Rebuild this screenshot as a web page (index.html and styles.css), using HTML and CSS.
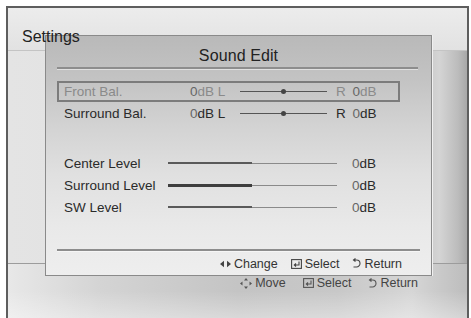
FILE: index.html
```html
<!doctype html>
<html lang="en">
  <head>
    <meta charset="UTF-8" />
    <meta name="viewport" content="width=device-width, initial-scale=1.0" />
    <title>Settings - Sound Edit</title>
    <link rel="stylesheet" href="styles.css">
  </head>
  <body>
    <div class="screen">
      <div class="topbar">
        <span class="screen-title">Settings</span>
      </div>
      <div class="menu-area"></div>
      <div class="guide">
        <span class="hint">
          <svg class="icon" width="12" height="11" viewBox="0 0 12 11">
            <path d="M6 0 L8 2.5 L4 2.5Z M6 11 L8 8.5 L4 8.5Z M0 5.5 L2.5 3.5 L2.5 7.5Z M12 5.5 L9.5 3.5 L9.5 7.5Z" fill="#555"/>
          </svg>Move
        </span>
        <span class="hint">
          <svg class="icon" width="11" height="10" viewBox="0 0 11 10">
            <rect x="0.6" y="0.6" width="9.8" height="8.8" fill="none" stroke="#555" stroke-width="1.1"/>
            <path d="M8 2.5 V6 H3.5 M5 4.5 L3.3 6 L5 7.5" fill="none" stroke="#555" stroke-width="1.1"/>
          </svg>Select
        </span>
        <span class="hint">
          <svg class="icon" width="9" height="11" viewBox="0 0 9 11">
            <path d="M2 2 H4.5 A3.5 3.5 0 0 1 4.5 9 H1.5 M3.5 0.5 L1.5 2 L3.5 3.5" fill="none" stroke="#555" stroke-width="1.1"/>
          </svg>Return
        </span>
      </div>

      <div class="dialog">
        <div class="dialog-title">Sound Edit</div>
        <div class="rule"></div>

        <div class="rows">
          <div class="row focused">
            <span class="label">Front Bal.</span>
            <span class="bal-left"><span class="zero">0</span>dB L</span>
            <span class="bal-track"><span class="bal-dot"></span></span>
            <span class="bal-right">R <span class="zero">0</span>dB</span>
          </div>
          <div class="row">
            <span class="label">Surround Bal.</span>
            <span class="bal-left"><span class="zero">0</span>dB L</span>
            <span class="bal-track"><span class="bal-dot"></span></span>
            <span class="bal-right">R <span class="zero">0</span>dB</span>
          </div>

          <div class="row level first">
            <span class="label">Center Level</span>
            <span class="lvl-track"><span class="lvl-fill"></span></span>
            <span class="lvl-value"><span class="zero">0</span>dB</span>
          </div>
          <div class="row level">
            <span class="label">Surround Level</span>
            <span class="lvl-track"><span class="lvl-fill thick"></span></span>
            <span class="lvl-value"><span class="zero">0</span>dB</span>
          </div>
          <div class="row level">
            <span class="label">SW Level</span>
            <span class="lvl-track"><span class="lvl-fill"></span></span>
            <span class="lvl-value"><span class="zero">0</span>dB</span>
          </div>
        </div>

        <div class="rule bottom"></div>
        <div class="dialog-foot">
          <span class="hint">
            <svg class="icon" width="11" height="8" viewBox="0 0 11 8">
              <path d="M0 4 L4 0.8 L4 7.2Z M11 4 L7 0.8 L7 7.2Z" fill="#444"/>
            </svg>Change
          </span>
          <span class="hint">
            <svg class="icon" width="11" height="10" viewBox="0 0 11 10">
              <rect x="0.6" y="0.6" width="9.8" height="8.8" fill="none" stroke="#444" stroke-width="1.1"/>
              <path d="M8 2.5 V6 H3.5 M5 4.5 L3.3 6 L5 7.5" fill="none" stroke="#444" stroke-width="1.1"/>
            </svg>Select
          </span>
          <span class="hint">
            <svg class="icon" width="9" height="11" viewBox="0 0 9 11">
              <path d="M2 2 H4.5 A3.5 3.5 0 0 1 4.5 9 H1.5 M3.5 0.5 L1.5 2 L3.5 3.5" fill="none" stroke="#444" stroke-width="1.1"/>
            </svg>Return
          </span>
        </div>
      </div>
    </div>
  </body>
</html>
```

FILE: styles.css
```css
body {
  margin: 0;
  background-color: #fff;
  font-family: "Liberation Sans", Arial, sans-serif;
  color: #2a2a2a;
  overflow: hidden;
}

.screen {
  position: relative;
  margin: 6px 2px 0 6px;
  height: 310px;
  border: 2px solid #5e5e5e;
  border-bottom: none;
  display: flex;
  flex-direction: column;
}

.topbar {
  height: 43px;
  padding: 20px 0 0 14px;
  box-sizing: border-box;
  background: linear-gradient(#ececec, #e2e2e2);
  border-bottom: 1px solid #c4c4c4;
}

/* the screen title is drawn above the popup */
.screen-title {
  position: relative;
  z-index: 2;
  font-size: 16px;
  line-height: 18px;
  color: #222;
}

.menu-area {
  height: 212px;
  background: linear-gradient(90deg, #e4e4e4 0%, #dcdcdc 85%, #cdcdcd 92%, #d4d4d4 94%, #bcbcbc 98%, #a8a8a8 100%);
  border-bottom: 1px solid #9c9c9c;
  box-shadow: 0 1px 0 #f4f4f4;
}

.guide {
  flex: 1;
  display: flex;
  align-items: flex-start;
  justify-content: flex-end;
  gap: 17px;
  padding: 12px 49px 0 0;
  font-size: 12.5px;
  color: #444;
  background:
    linear-gradient(rgba(255, 255, 255, 0) 50%, rgba(255, 255, 255, 0.35) 100%),
    linear-gradient(90deg, #e8e8e8 0%, #d4d4d4 20%, #c4c4c4 50%, #c8c8c8 72%, #d6d6d6 88%, #bdbdbd 100%);
}

.hint {
  display: flex;
  align-items: center;
  gap: 3px;
  line-height: 14px;
}

.icon {
  flex: none;
}

/* popup over the settings screen */
.dialog {
  position: absolute;
  z-index: 1;
  left: 37px;
  top: 27px;
  width: 385px;
  height: 239px;
  border: 1px solid #8a8a8a;
  box-shadow: 1px 0 0 #f0f0f0;
  background: linear-gradient(#b9b9b9 0%, #c3c3c3 18%, #d3d3d3 38%, #e0e0e0 58%, #e9e9e9 80%, #eeeeee 100%);
}

.dialog-title {
  height: 31px;
  line-height: 39px;
  text-align: center;
  font-size: 16px;
  color: #222;
  letter-spacing: 0.1px;
}

.rule {
  height: 2px;
  margin: 0 13px 0 11px;
  background-color: #8d8d8d;
  box-shadow: 0 1px 0 rgba(255, 255, 255, 0.5);
}

.rows {
  padding: 12px 0 0 11px;
  font-size: 13.5px;
}

.row {
  display: flex;
  align-items: center;
  height: 22px;
  width: 343px;
  box-sizing: border-box;
  padding-left: 7px;
}

.row.focused {
  height: 21px;
  border: 2px solid #7c7c7c;
  padding-left: 5px;
  color: #8a8a8a;
}

.row.level.first {
  margin-top: 28px;
}

.label {
  width: 126px;
  flex: none;
}

.level .label {
  width: 104px;
}

.zero {
  color: #666;
}

.bal-left {
  width: 50px;
}

.bal-track {
  position: relative;
  width: 87px;
  height: 1px;
  background-color: #555;
}

.bal-dot {
  position: absolute;
  left: 41px;
  top: -2px;
  width: 5px;
  height: 5px;
  border-radius: 50%;
  background-color: #444;
}

.bal-right {
  margin-left: 9px;
  word-spacing: 3px;
}

.lvl-track {
  position: relative;
  width: 169px;
  height: 1px;
  background-color: #8a8a8a;
}

.lvl-fill {
  position: absolute;
  left: 0;
  top: -1px;
  width: 84px;
  height: 2px;
  background-color: #5a5a5a;
}

.lvl-fill.thick {
  top: -1px;
  height: 3px;
  background-color: #3e3e3e;
}

.lvl-value {
  margin-left: 15px;
}

.rule.bottom {
  margin-top: 31px;
  margin-right: 11px;
  height: 1.5px;
}

.dialog-foot {
  display: flex;
  justify-content: flex-end;
  gap: 13px;
  padding: 6px 29px 0 0;
  font-size: 12.5px;
  color: #333;
}
```
